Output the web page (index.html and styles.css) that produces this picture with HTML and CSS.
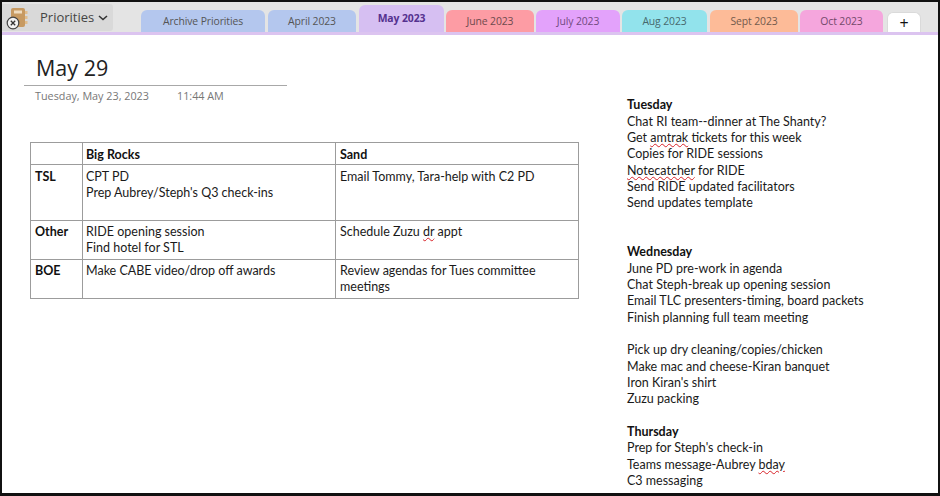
FILE: index.html
```html
<!DOCTYPE html>
<html lang="en">
<head>
<meta charset="utf-8">
<title>May 29 - Priorities</title>
<link rel="stylesheet" href="styles.css">
</head>
<body>
<div class="window">
  <header class="tabbar">
    <div class="notebook">
      <span class="nb-icon">
        <svg width="20" height="22" viewBox="0 0 20 22">
          <rect x="2" y="1" width="14" height="19" rx="2" fill="#c79a62"/>
          <rect x="5" y="3.500" width="8" height="3" fill="#efdcc0"/>
          <rect x="16" y="4" width="2.500" height="3" fill="#e0bd8e"/>
          <rect x="16" y="9" width="2.500" height="3" fill="#e0bd8e"/>
          <rect x="16" y="14" width="2.500" height="3" fill="#e0bd8e"/>
        </svg>
        <svg class="sync-badge" width="14" height="14" viewBox="0 0 14 14">
          <circle cx="7" cy="7" r="5.800" fill="#f2f2f2" stroke="#444" stroke-width="1.200"/>
          <path d="M4.800 4.800l4.400 4.400M9.200 4.800l-4.400 4.400" stroke="#333" stroke-width="1.300"/>
        </svg>
      </span>
      <span class="nb-name">Priorities</span>
      <svg class="chev" width="10" height="6" viewBox="0 0 10 6"><path d="M1 1l4 3.500L9 1" fill="none" stroke="#333" stroke-width="1.600"/></svg>
    </div>
    <nav class="tabs">
      <div class="tab t-archive">Archive Priorities</div>
      <div class="tab t-april">April 2023</div>
      <div class="tab t-may">May 2023</div>
      <div class="tab t-june">June 2023</div>
      <div class="tab t-july">July 2023</div>
      <div class="tab t-aug">Aug 2023</div>
      <div class="tab t-sept">Sept 2023</div>
      <div class="tab t-oct">Oct 2023</div>
      <div class="tab t-add">+</div>
    </nav>
  </header>
  <main class="page">
    <section class="left">
      <div class="title-block">
        <h1 class="title">May 29</h1>
        <div class="meta"><span>Tuesday, May 23, 2023</span><span>11:44 AM</span></div>
      </div>
      <table class="rocks">
        <colgroup><col class="c1"><col class="c2"><col class="c3"></colgroup>
        <tr class="r1"><td class="cl b"></td><td class="b">Big Rocks</td><td class="cr b">Sand</td></tr>
        <tr class="r2"><td class="cl b">TSL</td><td>CPT PD<br>Prep Aubrey/Steph's Q3 check-ins</td><td class="cr">Email Tommy, Tara-help with C2 PD</td></tr>
        <tr class="r3"><td class="cl b">Other</td><td>RIDE opening session<br>Find hotel for STL</td><td class="cr">Schedule Zuzu <span class="sp">dr</span> appt</td></tr>
        <tr class="r3"><td class="cl b">BOE</td><td>Make CABE video/drop off awards</td><td class="cr">Review agendas for Tues committee meetings</td></tr>
      </table>
    </section>
    <section class="notes">
      <p class="b">Tuesday</p>
      <p>Chat RI team--dinner at The Shanty?</p>
      <p>Get <span class="sp">amtrak</span> tickets for this week</p>
      <p>Copies for RIDE sessions</p>
      <p><span class="sp">Notecatcher</span> for RIDE</p>
      <p>Send RIDE updated facilitators</p>
      <p>Send updates template</p>
      <p class="gap"></p>
      <p class="gap"></p>
      <p class="b">Wednesday</p>
      <p>June PD pre-work in agenda</p>
      <p>Chat Steph-break up opening session</p>
      <p>Email TLC presenters-timing, board packets</p>
      <p>Finish planning full team meeting</p>
      <p class="gap"></p>
      <p>Pick up dry cleaning/copies/chicken</p>
      <p>Make mac and cheese-Kiran banquet</p>
      <p>Iron Kiran's shirt</p>
      <p>Zuzu packing</p>
      <p class="gap"></p>
      <p class="b">Thursday</p>
      <p>Prep for Steph's check-in</p>
      <p>Teams message-Aubrey <span class="sp">bday</span></p>
      <p>C3 messaging</p>
    </section>
  </main>
</div>
</body>
</html>
```
FILE: styles.css
```css
* { box-sizing: border-box; }
html, body { margin: 0; padding: 0; }
body { width: 940px; height: 496px; overflow: hidden; background: #fff; }
.window {
  width: 940px; height: 496px;
  border: 2px solid #111;
  border-bottom-width: 3px;
  display: flex; flex-direction: column;
  background: #fff;
  font-family: Lato, "Liberation Sans", sans-serif;
  color: #1a1a1a;
  overflow: hidden;
}
.tabbar {
  flex: none; height: 33px;
  display: flex; align-items: flex-end;
  background: #e4e4e4;
  border-bottom: 3px solid #dcc4f0;
}
.notebook {
  align-self: flex-start;
  width: 111px; height: 27px; margin-top: 2px;
  display: flex; align-items: center;
  background: #d9d9d9;
  border-radius: 0 3px 3px 0;
  font-family: "Open Sans", sans-serif;
  font-size: 13px; color: #444;
}
.nb-icon { position: relative; width: 38px; height: 22px; flex: none; padding-left: 7px; display: block; }
.nb-icon > svg:first-child { display: block; }
.sync-badge { position: absolute; left: 4px; top: 9px; }
.nb-name { margin-right: 4px; margin-top: -1px; }
.tabs { display: flex; align-items: flex-end; margin-left: 28px; height: 100%; }
.tab {
  height: 22px; margin-right: 2px;
  border-radius: 6px 6px 0 0;
  display: flex; align-items: center; justify-content: center;
  font-family: "Open Sans", sans-serif;
  font-size: 10.400px; letter-spacing: -0.1px;
  color: #555;
}
.t-archive { width: 124px; background: #b4c7ee; margin-right: 3px; }
.t-april { width: 88px; background: #b4c7ee; margin-right: 3px; }
.t-may { width: 85px; height: 27px; background: #d6bff2; color: #55318f; font-weight: 700; padding-bottom: 1px; }
.t-june { width: 88px; background: #fd9ca4; color: #6e4a4d; }
.t-july { width: 84px; background: #e3a2fb; color: #714a80; }
.t-aug { width: 85px; background: #92e3ec; color: #47696d; margin-right: 3px; }
.t-sept { width: 88px; background: #fdbb98; color: #735a4c; }
.t-oct { width: 83px; background: #f5a6dd; color: #74496a; margin-right: 4px; }
.t-add { width: 34px; height: 20px; background: #fff; color: #111; font-size: 16px; border: 1px solid #dadada; border-bottom: 0; }
.page { flex: 1; display: flex; min-height: 0; }
.left { width: 625px; flex: none; padding: 17px 0 0 22px; }
.title-block { width: 263px; }
.title {
  margin: 0; padding: 0 0 2px 12px;
  font-family: "Open Sans", sans-serif;
  font-size: 21.500px; font-weight: 400; line-height: 31px;
  color: #222;
  border-bottom: 1px solid #a8a8a8;
}
.meta {
  display: flex; gap: 28px; padding: 3px 0 0 11px;
  font-family: "Open Sans", sans-serif;
  font-size: 10.800px; line-height: 14px; color: #777;
}
.rocks {
  margin: 39px 0 0 6px;
  width: 548px; table-layout: fixed;
  border-collapse: collapse;
  font-size: 12.500px; line-height: 16.350px;
}
.c1 { width: 52px; }
.c2 { width: 253px; }
.c3 { width: 243px; }
.rocks td { border: 1px solid #9c9c9c; padding: 3px 4px 0 3px; vertical-align: top; }
.rocks .cl, .rocks .cr { padding-left: 4px; }
.rocks .r1 td, .rocks .r2 td { padding-top: 4px; }
.r1 { height: 22px; }
.r2 { height: 56px; }
.r3 { height: 39px; }
.b { font-weight: 700; color: #111; }
.notes { padding-top: 62.200px; font-size: 12.500px; line-height: 16.350px; }
.notes p { margin: 0; height: 16.350px; white-space: nowrap; }
.sp { text-decoration: underline wavy #d8242a 1px; text-underline-offset: 1px; }
```
